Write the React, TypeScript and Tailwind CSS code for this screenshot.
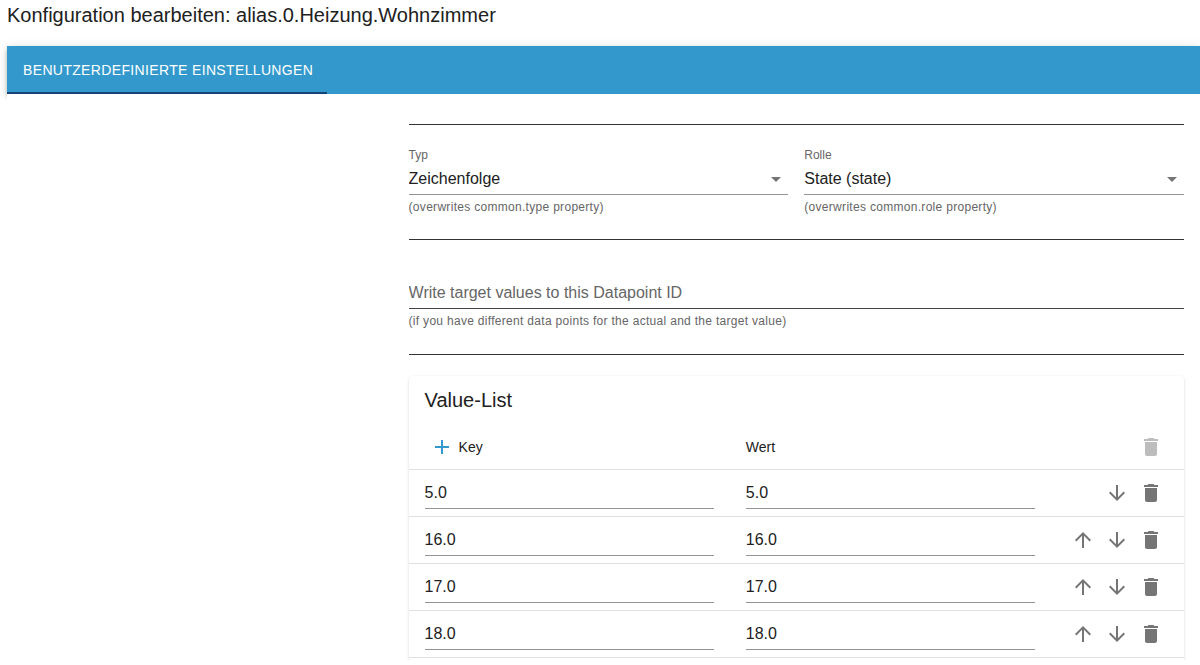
import React, { useState } from 'react';

const TYPES = ['Zeichenfolge'];
const ROLES = ['State (state)'];

const INITIAL_ROWS = [
  { key: '5.0', value: '5.0' },
  { key: '16.0', value: '16.0' },
  { key: '17.0', value: '17.0' },
  { key: '18.0', value: '18.0' },
  { key: '', value: '' },
];

const ICONS = {
  add: 'M19 13h-6v6h-2v-6H5v-2h6V5h2v6h6v2z',
  up: 'M4 12l1.41 1.41L11 7.83V20h2V7.83l5.58 5.59L20 12l-8-8-8 8z',
  down: 'M20 12l-1.41-1.41L13 16.17V4h-2v12.17l-5.58-5.59L4 12l8 8 8-8z',
  trash: 'M6 19c0 1.1.9 2 2 2h8c1.1 0 2-.9 2-2V7H6v12zM19 4h-3.5l-1-1h-5l-1 1H5v2h14V4z',
  dropdown: 'M7 10l5 5 5-5z',
};

const Icon: React.FC<{ name: keyof typeof ICONS }> = ({ name }) => (
  <svg viewBox="0 0 24 24" className="size-6 fill-current" aria-hidden="true">
    <path d={ICONS[name]} />
  </svg>
);

interface IconButtonProps {
  icon: keyof typeof ICONS;
  label: string;
  primary?: boolean;
  disabled?: boolean;
  onClick?: () => void;
}

const IconButton: React.FC<IconButtonProps> = ({ icon, label, primary, disabled, onClick }) => (
  <button
    type="button"
    aria-label={label}
    disabled={disabled}
    onClick={onClick}
    className={`rounded-full p-[5px] disabled:text-[#bdbdbd] ${primary ? 'text-[#3399cc]' : 'text-[#757575]'}`}
  >
    <Icon name={icon} />
  </button>
);

const HelperText: React.FC<{ children: React.ReactNode }> = ({ children }) => (
  <p className="mt-1 text-xs tracking-wide text-[#666666]">{children}</p>
);

interface SelectFieldProps {
  id: string;
  label: string;
  helper: string;
  options: string[];
}

const SelectField: React.FC<SelectFieldProps> = ({ id, label, helper, options }) => (
  <div>
    <label htmlFor={id} className="block text-xs text-[#666666]">{label}</label>
    <div className="relative">
      <select id={id} className="h-8 w-full appearance-none border-b border-[#949494] bg-transparent text-base outline-none">
        {options.map((option) => (
          <option key={option}>{option}</option>
        ))}
      </select>
      <span className="pointer-events-none absolute top-1 right-0 text-[#757575]">
        <Icon name="dropdown" />
      </span>
    </div>
    <HelperText>{helper}</HelperText>
  </div>
);

const Divider = () => <hr className="border-t border-[#333333]" />;

const ValueList: React.FC = () => {
  const [rows, setRows] = useState(INITIAL_ROWS);

  const update = (index: number, field: 'key' | 'value', text: string) => {
    setRows(rows.map((row, i) => (i === index ? { ...row, [field]: text } : row)));
  };

  const move = (index: number, step: number) => {
    const next = [...rows];
    [next[index], next[index + step]] = [next[index + step], next[index]];
    setRows(next);
  };

  const inputClass = 'h-8 w-full border-b border-[#949494] bg-transparent text-base outline-none';
  const headClass = 'h-[46px] border-b border-[#e0e0e0] px-4 py-0 font-normal';
  const cellClass = 'h-[47px] border-b border-[#e0e0e0] px-4 py-0';

  return (
    <section className="mt-[21px] rounded bg-white pt-2 pb-8 shadow-[0_1px_3px_rgba(0,0,0,0.16)]">
      <h2 className="mb-2 px-4 text-xl leading-8">Value-List</h2>
      <table className="w-full table-fixed border-separate border-spacing-0 text-left">
        <thead className="text-sm">
          <tr>
            <th className={headClass}>
              <div className="flex items-center">
                <IconButton icon="add" label="Hinzufügen" primary onClick={() => setRows([...rows, { key: '', value: '' }])} />
                Key
              </div>
            </th>
            <th className={headClass}>Wert</th>
            <th className={`${headClass} w-[133px]`}>
              <div className="flex justify-end">
                <IconButton icon="trash" label="Alle löschen" disabled />
              </div>
            </th>
          </tr>
        </thead>
        <tbody>
          {rows.map((row, i) => (
            <tr key={i}>
              <td className={cellClass}>
                <input aria-label="Key" className={inputClass} value={row.key} onChange={(e) => update(i, 'key', e.target.value)} />
              </td>
              <td className={cellClass}>
                <input aria-label="Wert" className={inputClass} value={row.value} onChange={(e) => update(i, 'value', e.target.value)} />
              </td>
              <td className={cellClass}>
                <div className="flex justify-end">
                  {i > 0 && <IconButton icon="up" label="Nach oben" onClick={() => move(i, -1)} />}
                  {i < rows.length - 1 && <IconButton icon="down" label="Nach unten" onClick={() => move(i, 1)} />}
                  <IconButton icon="trash" label="Löschen" onClick={() => setRows(rows.filter((_, r) => r !== i))} />
                </div>
              </td>
            </tr>
          ))}
        </tbody>
      </table>
    </section>
  );
};

export default function App() {
  return (
    <div className="flex h-screen flex-col bg-white pb-[5px] pl-[7px] font-['Liberation_Sans',Arial,sans-serif] text-[#212121]">
      <h1 className="mb-4 text-xl leading-[30px]">Konfiguration bearbeiten: alias.0.Heizung.Wohnzimmer</h1>

      <header
        role="tablist"
        className="flex h-12 shrink-0 bg-[#3399cc] shadow-[0_2px_4px_-1px_rgba(0,0,0,0.2),0_4px_5px_rgba(0,0,0,0.14),0_1px_10px_rgba(0,0,0,0.12)]"
      >
        <button
          type="button"
          role="tab"
          aria-selected="true"
          className="w-80 px-4 text-left text-sm tracking-wide whitespace-nowrap text-white uppercase shadow-[inset_0_-2px_0_#164477]"
        >
          Benutzerdefinierte Einstellungen
        </button>
      </header>

      <main className="relative min-h-0 flex-1 overflow-y-auto bg-white pt-[30px] [scrollbar-width:none]">
        <div className="mr-4 ml-auto w-[65%]">
          <Divider />
          <div className="grid grid-cols-2 gap-4 pt-[22px] pb-6">
            <SelectField id="type" label="Typ" helper="(overwrites common.type property)" options={TYPES} />
            <SelectField id="role" label="Rolle" helper="(overwrites common.role property)" options={ROLES} />
          </div>
          <Divider />
          <div className="pt-[37px] pb-[25px]">
            <input
              aria-label="Write target values to this Datapoint ID"
              placeholder="Write target values to this Datapoint ID"
              className="block h-8 w-full border-b border-[#444444] bg-transparent text-base outline-none placeholder:text-[#666666]"
            />
            <HelperText>(if you have different data points for the actual and the target value)</HelperText>
          </div>
          <Divider />
          <ValueList />
        </div>
      </main>
    </div>
  );
}
